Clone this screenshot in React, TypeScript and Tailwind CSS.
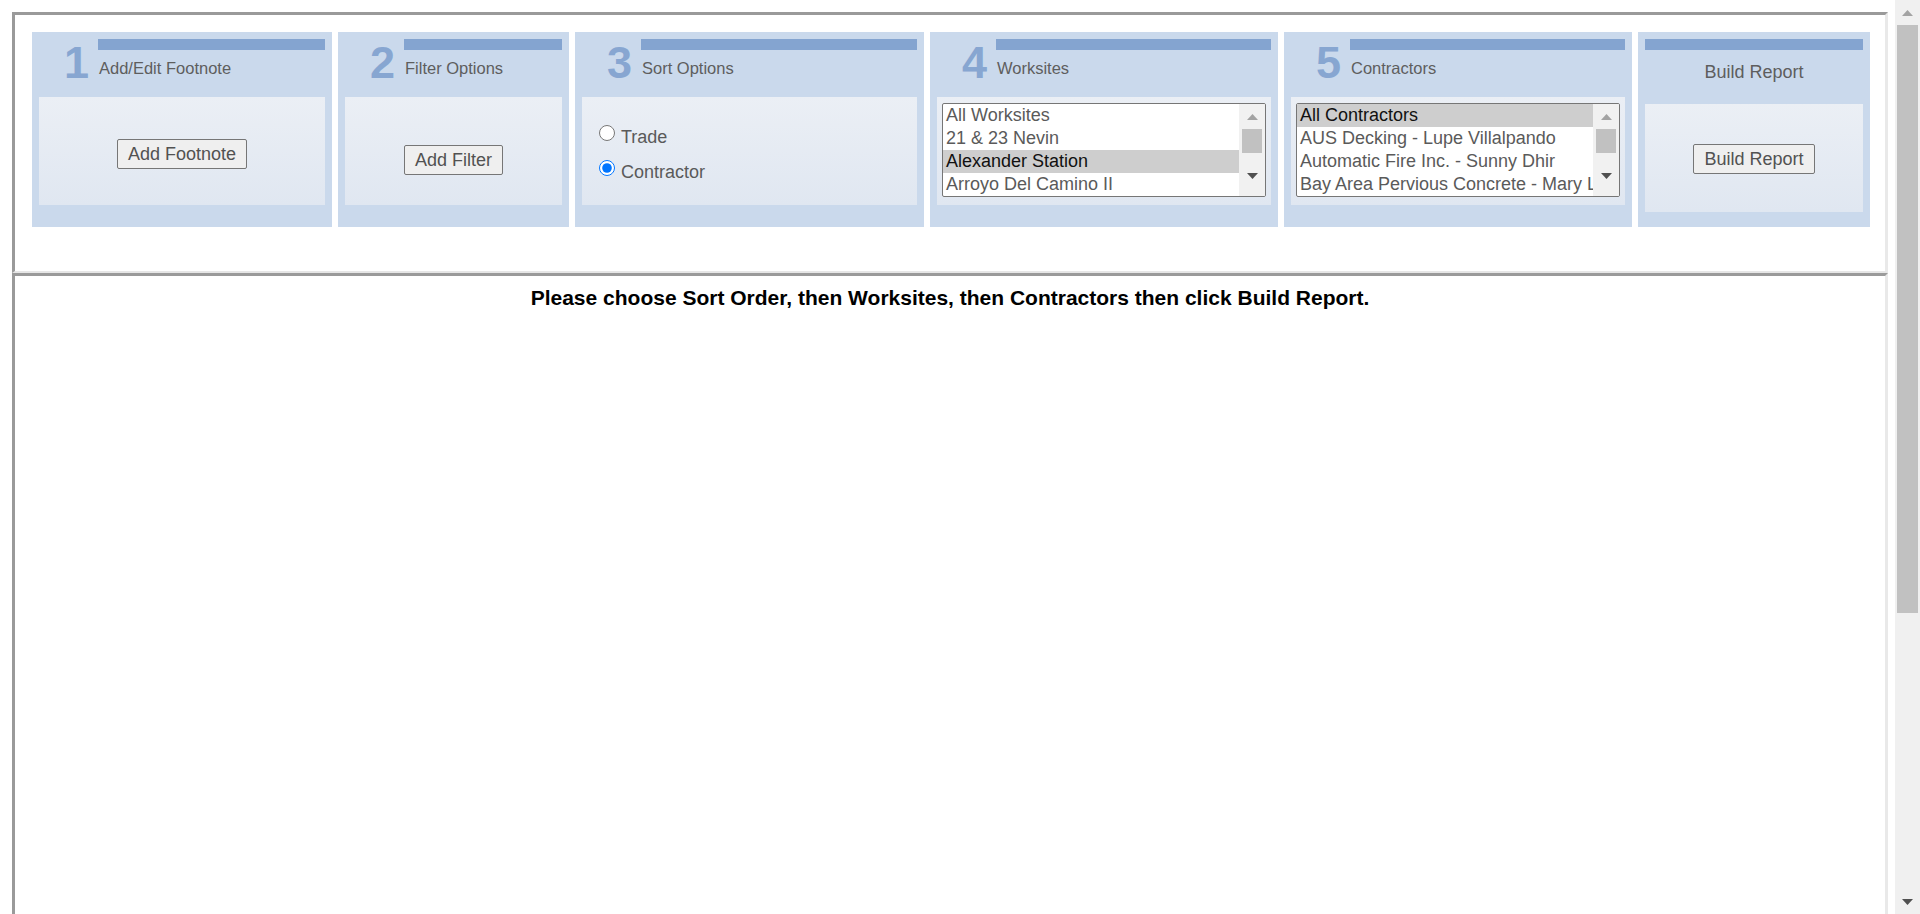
import React from "react";

const worksites = ["All Worksites", "21 & 23 Nevin", "Alexander Station", "Arroyo Del Camino II"];
const contractors = [
  "All Contractors",
  "AUS Decking - Lupe Villalpando",
  "Automatic Fire Inc. - Sunny Dhir",
  "Bay Area Pervious Concrete - Mary Lou",
];

function ArrowUp({ color }: { color: string }) {
  return (
    <svg width="11" height="6" viewBox="0 0 11 6">
      <polygon points="0,6 5.5,0 11,6" fill={color} />
    </svg>
  );
}

function ArrowDown({ color }: { color: string }) {
  return (
    <svg width="11" height="6" viewBox="0 0 11 6">
      <polygon points="0,0 11,0 5.5,6" fill={color} />
    </svg>
  );
}

function NumberedHeader({ num, title }: { num: string; title: string }) {
  return (
    <div className="flex h-[58px]">
      <div className="w-[59px] shrink-0 pr-[9px] pt-[1px] text-right text-[45px] font-bold leading-[45px] text-[#87a6d1]">
        {num}
      </div>
      <div className="flex-1">
        <div className="h-[11px] bg-[#84a4d0]" />
        <div className="mt-[9px] pl-[1px] text-[16.5px] leading-[19px] text-[#5e5e5e]">{title}</div>
      </div>
    </div>
  );
}

function InnerBox({ children, className = "" }: { children?: React.ReactNode; className?: string }) {
  return <div className={`h-[108px] bg-linear-to-b from-[#ebeff5] to-[#e0e7f1] ${className}`}>{children}</div>;
}

function OldButton({ label }: { label: string }) {
  return (
    <button className="h-[30px] rounded-[2px] border border-[#767676] bg-[#efefef] px-[10px] text-[18px] leading-[28px] text-[#525252]">
      {label}
    </button>
  );
}

function ListBox({ items, selected }: { items: string[]; selected: number }) {
  return (
    <div className="flex h-[94px] overflow-hidden rounded-[2px] border border-[#767676] bg-white">
      <div className="min-w-0 flex-1 overflow-hidden">
        {items.map((item, i) => (
          <div
            key={item}
            className={`h-[23px] whitespace-nowrap pl-[3px] text-[18px] leading-[22px] ${
              i === selected ? "bg-[#cecece] text-[#111]" : "text-[#5a5a5a]"
            }`}
          >
            {item}
          </div>
        ))}
      </div>
      <div className="flex w-[26px] shrink-0 flex-col bg-[#f1f1f1]">
        <div className="flex h-[25px] items-center justify-center">
          <ArrowUp color="#a3a3a3" />
        </div>
        <div className="mx-[3px] h-[24px] bg-[#c1c1c1]" />
        <div className="flex flex-1 items-center justify-center pt-[2px]">
          <ArrowDown color="#505050" />
        </div>
      </div>
    </div>
  );
}

export default function App() {
  return (
    <div className="flex h-[914px] w-full overflow-hidden bg-white font-['Liberation_Sans',Arial,sans-serif]">
      <div className="flex min-w-0 flex-1 flex-col pl-[12px] pr-[7px] pt-[12px]">
        {/* top frame */}
        <div className="h-[261px] shrink-0 border-t-[3px] border-r-[3px] border-b-[2px] border-l-[3px] border-t-[#9a9a9a] border-r-[#e9e9e9] border-b-[#e6e6e6] border-l-[#9a9a9a] pl-[17px] pt-[17px]">
          <div className="flex gap-[6px]">
            <div className="h-[195px] w-[300px] bg-[#cad9ec] px-[7px] pt-[7px]">
              <NumberedHeader num="1" title="Add/Edit Footnote" />
              <InnerBox className="flex justify-center pt-[42px]">
                <OldButton label="Add Footnote" />
              </InnerBox>
            </div>

            <div className="h-[195px] w-[231px] bg-[#cad9ec] px-[7px] pt-[7px]">
              <NumberedHeader num="2" title="Filter Options" />
              <InnerBox className="flex justify-center pt-[48px]">
                <OldButton label="Add Filter" />
              </InnerBox>
            </div>

            <div className="h-[195px] w-[349px] bg-[#cad9ec] px-[7px] pt-[7px]">
              <NumberedHeader num="3" title="Sort Options" />
              <InnerBox className="pl-[17px] pt-[28px]">
                <label className="flex h-[35px] items-start text-[18px] leading-[21px] text-[#5a5a5a]">
                  <input type="radio" name="sort" className="m-0 mr-[6px] h-[16px] w-[16px]" />
                  <span className="mt-[2px]">Trade</span>
                </label>
                <label className="flex h-[35px] items-start text-[18px] leading-[21px] text-[#5a5a5a]">
                  <input type="radio" name="sort" defaultChecked className="m-0 mr-[6px] h-[16px] w-[16px]" />
                  <span className="mt-[2px]">Contractor</span>
                </label>
              </InnerBox>
            </div>

            <div className="h-[195px] w-[348px] bg-[#cad9ec] px-[7px] pt-[7px]">
              <NumberedHeader num="4" title="Worksites" />
              <InnerBox className="px-[5px] pt-[6px]">
                <ListBox items={worksites} selected={2} />
              </InnerBox>
            </div>

            <div className="h-[195px] w-[348px] bg-[#cad9ec] px-[7px] pt-[7px]">
              <NumberedHeader num="5" title="Contractors" />
              <InnerBox className="px-[5px] pt-[6px]">
                <ListBox items={contractors} selected={0} />
              </InnerBox>
            </div>

            <div className="h-[195px] w-[232px] bg-[#cad9ec] px-[7px] pt-[7px]">
              <div className="h-[65px]">
                <div className="h-[11px] bg-[#84a4d0]" />
                <div className="mt-[12px] text-center text-[18px] leading-[21px] text-[#5e5e5e]">Build Report</div>
              </div>
              <InnerBox className="flex justify-center pt-[40px]">
                <OldButton label="Build Report" />
              </InnerBox>
            </div>
          </div>
        </div>

        {/* bottom frame */}
        <div className="flex-1 border-t-[3px] border-r-[3px] border-l-[3px] border-t-[#9a9a9a] border-r-[#e9e9e9] border-l-[#9a9a9a] pt-[10px] text-center text-[21px] font-bold leading-[24px] text-black">
          Please choose Sort Order, then Worksites, then Contractors then click Build Report.
        </div>
      </div>

      {/* page scrollbar */}
      <div className="flex w-[25px] shrink-0 flex-col bg-[#f0f0f0]">
        <div className="flex h-[25px] items-center justify-center">
          <ArrowUp color="#a3a3a3" />
        </div>
        <div className="mx-[2px] h-[588px] bg-[#c1c1c1]" />
        <div className="flex-1" />
        <div className="flex h-[25px] items-center justify-center">
          <ArrowDown color="#505050" />
        </div>
      </div>
    </div>
  );
}
